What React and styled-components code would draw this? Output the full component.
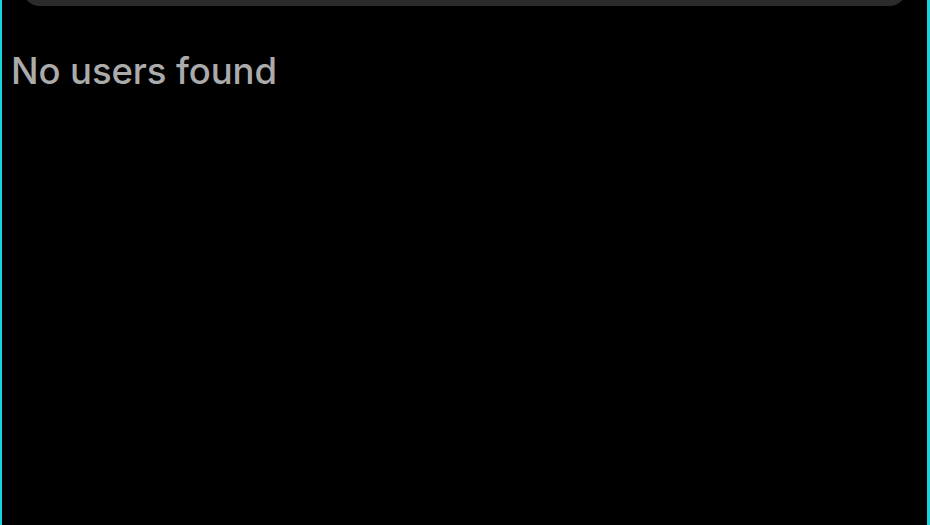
import React from 'react';
import styled, {createGlobalStyle} from 'styled-components';

const GlobalStyle = createGlobalStyle`
html, body {
  margin: 0;
  padding: 0;
  background: #000;
}
body {
  font-family: Inter, "Liberation Sans", Arial, sans-serif;
}
`;

const Screen = styled.div`
  height: 525px;
  box-sizing: border-box;
  background: #000;
  border-left: 2px solid #19d3dc;
  border-right: 3px solid #19d3dc;
  overflow: hidden;
  display: flex;
  flex-direction: column;
`;

const SearchBar = styled.div`
  height: 48px;
  margin: -42px 20px 0 20px;
  background: #2b2b2b;
  border-radius: 18px;
`;

const EmptyText = styled.p`
  margin: 42px 0 0 9px;
  color: #ababab;
  font-size: 36.5px;
  font-weight: 500;
  line-height: 46px;
  letter-spacing: -0.1px;
`;

function UserSearch() {
    const [users] = React.useState([]);
    return (
        <Screen>
            <SearchBar/>
            {users.length === 0 && <EmptyText>No users found</EmptyText>}
        </Screen>
    );
}

export default function App() {
    return (
        <>
            <GlobalStyle/>
            <UserSearch/>
        </>
    );
}
